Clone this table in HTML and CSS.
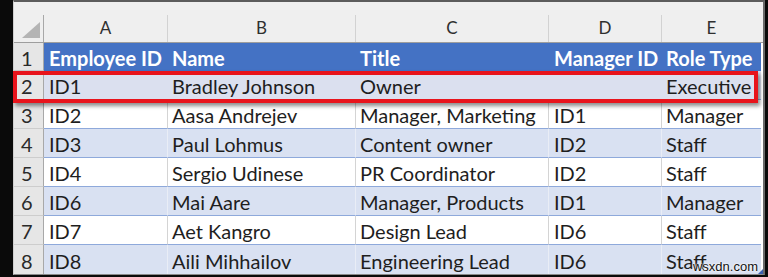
FILE: index.html
```html
<!DOCTYPE html>
<html>
<head>
<meta charset="utf-8">
<link rel="stylesheet" href="styles.css">
</head>
<body>
<div class="frame">
  <div class="sheet">
    <div class="row colhead">
      <div class="corner"><svg width="18" height="16" viewBox="0 0 18 16"><polygon points="18,0 18,16 0,16" fill="#b4b4b4"/></svg></div>
      <div class="ch">A</div><div class="ch">B</div><div class="ch">C</div><div class="ch">D</div><div class="ch">E</div>
    </div>
    <div class="row thead">
      <div class="rh">1</div>
      <div class="c">Employee ID</div><div class="c">Name</div><div class="c">Title</div><div class="c">Manager ID</div><div class="c">Role Type</div>
    </div>
    <div class="row band sel">
      <div class="rh">2</div>
      <div class="c">ID1</div><div class="c">Bradley Johnson</div><div class="c">Owner</div><div class="c"></div><div class="c">Executive</div>
    </div>
    <div class="row plain">
      <div class="rh">3</div>
      <div class="c">ID2</div><div class="c">Aasa Andrejev</div><div class="c">Manager, Marketing</div><div class="c">ID1</div><div class="c">Manager</div>
    </div>
    <div class="row band">
      <div class="rh">4</div>
      <div class="c">ID3</div><div class="c">Paul Lohmus</div><div class="c">Content owner</div><div class="c">ID2</div><div class="c">Staff</div>
    </div>
    <div class="row plain">
      <div class="rh">5</div>
      <div class="c">ID4</div><div class="c">Sergio Udinese</div><div class="c">PR Coordinator</div><div class="c">ID2</div><div class="c">Staff</div>
    </div>
    <div class="row band">
      <div class="rh">6</div>
      <div class="c">ID6</div><div class="c">Mai Aare</div><div class="c">Manager, Products</div><div class="c">ID1</div><div class="c">Manager</div>
    </div>
    <div class="row plain">
      <div class="rh">7</div>
      <div class="c">ID7</div><div class="c">Aet Kangro</div><div class="c">Design Lead</div><div class="c">ID6</div><div class="c">Staff</div>
    </div>
    <div class="row band last">
      <div class="rh">8</div>
      <div class="c">ID8</div><div class="c">Aili Mihhailov</div><div class="c">Engineering Lead</div><div class="c">ID6</div><div class="c">Staff</div>
    </div>
    <div class="highlight"></div>
    <div class="handle"></div>
    <div class="watermark">wsxdn.com</div>
  </div>
</div>
</body>
</html>
```
FILE: styles.css
```css
* { box-sizing: border-box; }
html, body { margin: 0; padding: 0; }
body {
  background: #0a0a0a;
  width: 768px;
  height: 277px;
  overflow: hidden;
  font-family: Lato, "Open Sans", sans-serif;
}
.frame {
  padding-left: 13px;
  height: 277px;
}
.sheet {
  position: relative;
  width: 752px;
  background: #ffffff;
  border-top: 2px solid #5c5c5c;
  border-left: 1px solid #cfcfcf;
  border-right: 2px solid #6a6a6a;
  border-bottom: 1px solid #8a8a8a;
  display: flex;
  flex-direction: column;
}
.row {
  display: grid;
  grid-template-columns: 30px 124px 188px 193px 113px 99px;
  height: 29px;
}
.colhead {
  height: 41px;
  background: #efefef;
  border-bottom: 1px solid #9e9e9e;
}
.corner {
  border-right: 1px solid #a8a8a8;
  margin-top: 13px;
  display: flex;
  align-items: flex-start;
  justify-content: flex-end;
  padding: 7px 3px 0 0;
}
.ch {
  margin-top: 13px;
  border-right: 1px solid #d2d2d2;
  display: flex;
  align-items: center;
  justify-content: center;
  color: #2f2f2f;
  font-size: 17px;
  padding-bottom: 3px;
}
.ch:last-child { border-right: none; }
.rh {
  background: #e6e6e6;
  border-right: 1px solid #a8a8a8;
  border-bottom: 1px solid #cdcdcd;
  color: #2a2a2a;
  font-size: 20px;
  display: flex;
  align-items: center;
  padding-left: 7px;
  padding-top: 2px;
}
.c {
  display: flex;
  align-items: center;
  padding-left: 4px;
  padding-top: 2px;
  font-size: 20px;
  color: #1e1e1e;
  white-space: nowrap;
  overflow: hidden;
  border-bottom: 1px solid #8ea9db;
}
.c:nth-child(2), .c:nth-child(5) { padding-left: 5px; }
.thead { height: 28px; }
.thead .c {
  background: #4472c4;
  color: #ffffff;
  font-weight: 700;
  border-bottom: 1px solid #4472c4;
}
.band .c {
  background: #d9e1f2;
  border-right: 1px solid #e9edf6;
}
.plain .c {
  background: #ffffff;
  border-right: 1px solid #d4d4d4;
}
.sel .c { background: #dbe0ef; border-right-color: #dbe0ef; }
.c:last-child { border-right: none !important; }
.last .c, .last .rh { border-bottom: none; }
.highlight {
  position: absolute;
  left: -1px;
  top: 69px;
  width: 745px;
  height: 32px;
  border: 4px solid #e8141c;
  box-shadow: 2px 3px 4px rgba(0, 0, 0, 0.45);
}
.handle {
  position: absolute;
  right: 0;
  bottom: 0;
  width: 0;
  height: 0;
  border-left: 5px solid transparent;
  border-bottom: 5px solid #3a5fb0;
}
.watermark {
  position: absolute;
  right: 5px;
  bottom: 1px;
  font-family: "Liberation Sans", Arial, sans-serif;
  font-size: 13px;
  line-height: 13px;
  color: #111111;
  text-shadow: 0 0 2px #ffffff, 0 0 2px #ffffff;
}
```
